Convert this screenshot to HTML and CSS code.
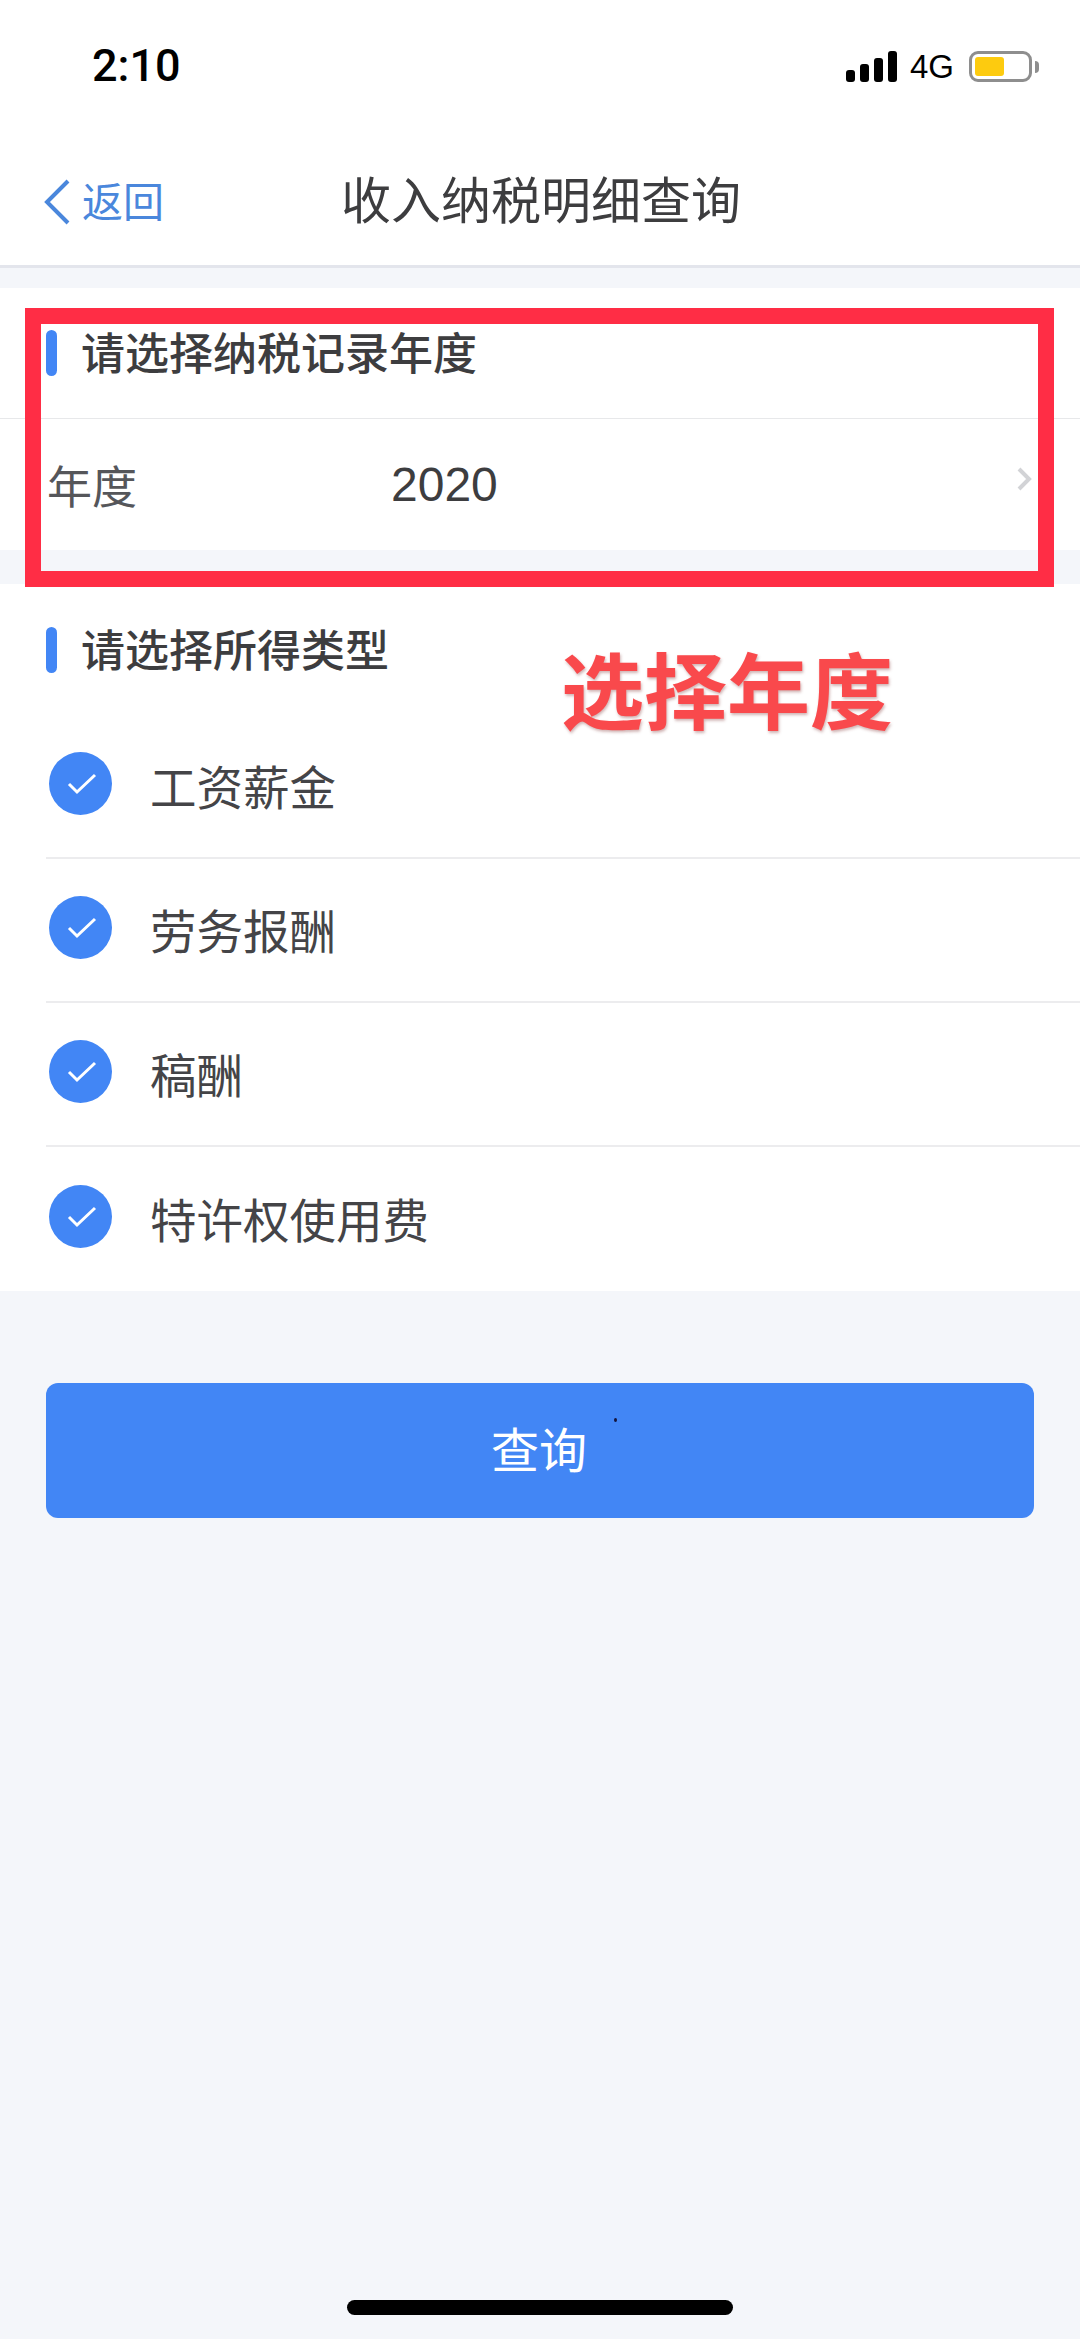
FILE: index.html
```html
<!DOCTYPE html>
<html lang="zh-CN">
<head>
    <meta charset="UTF-8">
    <meta name="viewport" content="width=device-width, initial-scale=1.0">
    <title>收入纳税明细查询</title>
    <link rel="stylesheet" href="styles.css">
</head>
<body>
    <div class="status-bar">
        <span class="time">2:10</span>
        <div class="status-icons">
            <div class="signal">
                <span class="bar bar-1"></span>
                <span class="bar bar-2"></span>
                <span class="bar bar-3"></span>
                <span class="bar bar-4"></span>
            </div>
            <span class="network">4G</span>
            <div class="battery"><span class="battery-level"></span></div>
            <span class="battery-nub"></span>
        </div>
    </div>

    <div class="nav-bar">
        <div class="back">
            <svg class="back-icon" width="26" height="46" viewBox="0 0 26 46">
                <path d="M24 2 L3 23 L24 44" fill="none" stroke="#4a87dc" stroke-width="4"/>
            </svg>
            <span class="back-text">返回</span>
        </div>
        <div class="nav-title">收入纳税明细查询</div>
    </div>

    <div class="section section-year">
        <div class="section-head">
            <span class="section-mark"></span>
            <span class="section-text">请选择纳税记录年度</span>
        </div>
        <div class="year-row">
            <span class="year-label">年度</span>
            <span class="year-value">2020</span>
            <svg class="year-arrow" width="16" height="24" viewBox="0 0 16 24">
                <path d="M3 2 L13 12 L3 22" fill="none" stroke="#d2d3d6" stroke-width="4"/>
            </svg>
        </div>
    </div>

    <div class="section section-type">
        <div class="section-head">
            <span class="section-mark"></span>
            <span class="section-text">请选择所得类型</span>
        </div>
        <div class="type-row">
            <svg class="check" width="63" height="63" viewBox="0 0 63 63">
                <circle cx="31.5" cy="31.5" r="31.5" fill="#4286f5"/>
                <path d="M20 32 L28 40 L46 23" fill="none" stroke="#fff" stroke-width="3"/>
            </svg>
            <span class="type-text">工资薪金</span>
        </div>
        <div class="type-row">
            <svg class="check" width="63" height="63" viewBox="0 0 63 63">
                <circle cx="31.5" cy="31.5" r="31.5" fill="#4286f5"/>
                <path d="M20 32 L28 40 L46 23" fill="none" stroke="#fff" stroke-width="3"/>
            </svg>
            <span class="type-text">劳务报酬</span>
        </div>
        <div class="type-row">
            <svg class="check" width="63" height="63" viewBox="0 0 63 63">
                <circle cx="31.5" cy="31.5" r="31.5" fill="#4286f5"/>
                <path d="M20 32 L28 40 L46 23" fill="none" stroke="#fff" stroke-width="3"/>
            </svg>
            <span class="type-text">稿酬</span>
        </div>
        <div class="type-row">
            <svg class="check" width="63" height="63" viewBox="0 0 63 63">
                <circle cx="31.5" cy="31.5" r="31.5" fill="#4286f5"/>
                <path d="M20 32 L28 40 L46 23" fill="none" stroke="#fff" stroke-width="3"/>
            </svg>
            <span class="type-text">特许权使用费</span>
        </div>
    </div>

    <div class="query-btn"><span class="query-text">查询</span><span class="speck"></span></div>

    <div class="home-indicator"></div>

    <!-- red annotation drawn over the screenshot -->
    <div class="mark-box"></div>
    <div class="mark-text">选择年度</div>
</body>
</html>
```

FILE: styles.css
```css
* {
    box-sizing: border-box;
}
body {
    margin: 0;
    width: 1080px;
    height: 2339px;
    position: relative;
    display: flex;
    flex-direction: column;
    overflow: hidden;
    background-color: #f4f6fa;
    color: #3d3d3f;
    font-family: "Liberation Sans", "Noto Sans CJK SC", sans-serif;
}

/* status bar */
.status-bar {
    height: 96px;
    flex: none;
    display: flex;
    justify-content: space-between;
    align-items: flex-start;
    padding: 43px 41px 0 92px;
    background-color: #fff;
}
.time {
    font-family: Roboto, sans-serif;
    font-size: 45px;
    line-height: 46px;
    font-weight: 500;
    color: #000;
}
.status-icons {
    display: flex;
    align-items: center;
    height: 31px;
    margin-top: 8px;
}
.signal {
    display: flex;
    align-items: flex-end;
    gap: 5px;
    height: 31px;
}
.bar {
    width: 9px;
    background-color: #000;
    border-radius: 3px;
}
.bar-1 { height: 12px; }
.bar-2 { height: 18px; }
.bar-3 { height: 24px; }
.bar-4 { height: 31px; }
.network {
    font-size: 33px;
    line-height: 31px;
    color: #000;
    margin-left: 13px;
    width: 46px;
}
.battery {
    width: 63px;
    height: 31px;
    margin-left: 13px;
    padding: 3px;
    border: 3px solid #8e8e8e;
    border-radius: 9px;
    background-color: #fff;
}
.battery-level {
    display: block;
    width: 29px;
    height: 100%;
    background-color: #fdcb0f;
    border-radius: 3px;
}
.battery-nub {
    width: 4px;
    height: 12px;
    margin-left: 3px;
    background-color: #8e8e8e;
    border-radius: 0 6px 6px 0;
}

/* nav bar */
.nav-bar {
    height: 172px;
    flex: none;
    display: flex;
    align-items: center;
    position: relative;
    padding: 42px 0 0 44px;
    background-color: #fff;
    border-bottom: 3px solid #e3e5ec;
    margin-bottom: 20px;
}
.back {
    display: flex;
    align-items: center;
    gap: 12px;
    width: 297px;
    font-size: 41px;
    color: #4a87dc;
}
.back-text {
    margin-top: -5px;
}
.nav-title {
    font-size: 50px;
    line-height: 60px;
    color: #3d3d3f;
}

/* sections */
.section {
    flex: none;
    background-color: #fff;
}
.section-year {
    margin-bottom: 34px;
}
.section-head {
    height: 130px;
    display: flex;
    align-items: center;
    gap: 24px;
    padding-left: 46px;
    font-size: 44px;
    font-weight: 500;
}
.section-type .section-head {
    height: 131px;
}
.section-text {
    margin-top: -4px;
}
.section-mark {
    width: 11px;
    height: 46px;
    border-radius: 6px;
    background-color: #4286f5;
}
.year-row {
    height: 132px;
    display: flex;
    align-items: center;
    padding: 0 48px 0 47px;
    border-top: 1px solid #e7e8ea;
}
.year-label {
    width: 344px;
    font-size: 45px;
    color: #55565a;
}
.year-value {
    flex: 1;
    font-size: 48px;
}
.year-arrow {
    margin-bottom: 12px;
}
.type-row {
    height: 144px;
    display: flex;
    align-items: center;
    gap: 38px;
    margin-left: 46px;
    padding: 0 0 6px 3px;
    font-size: 46.5px;
    color: #444447;
    border-bottom: 2px solid #ececee;
}
.type-row:last-child {
    border-bottom: none;
}
.type-text {
    margin-top: 2px;
}
.check {
    flex: none;
}

/* query button */
.query-btn {
    flex: none;
    height: 135px;
    margin: 92px 46px 0;
    position: relative;
    display: flex;
    align-items: center;
    justify-content: center;
    border-radius: 12px;
    background-color: #4286f5;
    color: #fff;
    font-size: 48px;
}
.query-text {
    margin-top: -8px;
    margin-right: 2px;
}
.speck {
    position: absolute;
    left: 568px;
    top: 35px;
    width: 3px;
    height: 4px;
    border-radius: 50%;
    background-color: #14143c;
}

.home-indicator {
    flex: none;
    width: 386px;
    height: 15px;
    margin: auto 0 24px 347px;
    border-radius: 8px;
    background-color: #000;
}

/* annotation */
.mark-box {
    position: absolute;
    left: 25px;
    top: 308px;
    width: 1029px;
    height: 279px;
    border: 16px solid #ff2d45;
}
.mark-text {
    position: absolute;
    left: 561px;
    top: 640px;
    font-size: 83px;
    line-height: 110px;
    font-weight: 600;
    color: #f9494c;
    text-shadow: 1px 2px 3px rgba(120, 40, 40, 0.35);
}
```
